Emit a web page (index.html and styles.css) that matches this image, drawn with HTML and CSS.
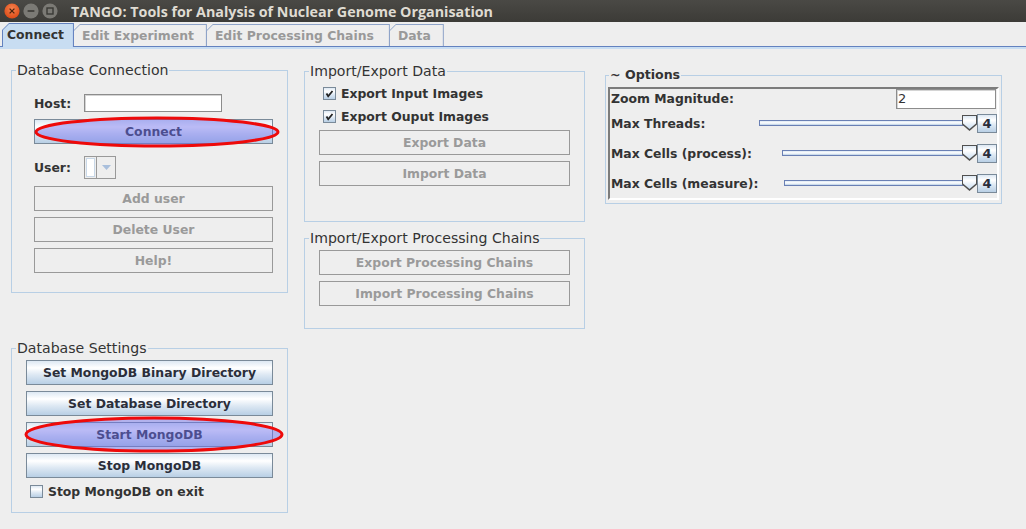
FILE: index.html
```html
<!DOCTYPE html>
<html lang="en">

<head>
    <meta charset="UTF-8">
    <title>TANGO: Tools for Analysis of Nuclear Genome Organisation</title>
    <link rel="stylesheet" href="styles.css">
</head>

<body>
    <div class="titlebar">
        <div class="win-buttons">
            <svg class="win-btn" width="16" height="16" viewBox="0 0 16 16">
                <defs>
                    <radialGradient id="closeGrad" cx="50%" cy="35%" r="65%">
                        <stop offset="0" stop-color="#f6834f" />
                        <stop offset="1" stop-color="#dd4a16" />
                    </radialGradient>
                </defs>
                <circle cx="8" cy="8" r="7.6" fill="url(#closeGrad)" />
                <path d="M5.6 5.6 L10.4 10.4 M10.4 5.6 L5.6 10.4" stroke="#4a2410" stroke-width="1.3" />
            </svg>
            <svg class="win-btn" width="16" height="16" viewBox="0 0 16 16">
                <circle cx="8" cy="8" r="7.6" fill="#7b7a75" />
                <path d="M4.6 8 H11.4" stroke="#3a3935" stroke-width="1.6" />
            </svg>
            <svg class="win-btn" width="16" height="16" viewBox="0 0 16 16">
                <circle cx="8" cy="8" r="7.6" fill="#7b7a75" />
                <rect x="5" y="5" width="6" height="6" fill="none" stroke="#3a3935" stroke-width="1.4" />
            </svg>
        </div>
        <span class="win-title">TANGO: Tools for Analysis of Nuclear Genome Organisation</span>
    </div>

    <div class="tabbar">
        <div class="tab active"><span>Connect</span></div>
        <div class="tab"><span>Edit Experiment</span></div>
        <div class="tab tab-wide"><span>Edit Processing Chains</span></div>
        <div class="tab"><span>Data</span></div>
    </div>

    <div class="content">
        <div class="col col-left">
            <fieldset class="panel">
                <legend>Database Connection</legend>
                <div class="panel-body conn-body">
                    <div class="field-row">
                        <label class="lbl" for="host">Host:</label>
                        <input type="text" id="host" class="text-input host-input">
                    </div>
                    <div class="marked connect-wrap">
                        <button class="btn">Connect</button>
                        <svg class="mark mark-connect" width="247" height="32" viewBox="0 0 247 32">
                            <ellipse cx="123" cy="16" rx="121" ry="14" fill="rgba(112,112,236,0.48)"
                                stroke="#ee0a0a" stroke-width="3" />
                        </svg>
                    </div>
                    <div class="field-row user-row">
                        <span class="lbl">User:</span>
                        <div class="combo">
                            <span class="combo-box"><span></span></span>
                            <span class="combo-arrow">
                                <svg width="9" height="5" viewBox="0 0 9 5">
                                    <path d="M0 0 H9 L4.5 5 Z" fill="#a9bfdc" />
                                </svg>
                            </span>
                        </div>
                    </div>
                    <div class="btn-stack user-buttons">
                        <button class="btn" disabled>Add user</button>
                        <button class="btn" disabled>Delete User</button>
                        <button class="btn" disabled>Help!</button>
                    </div>
                </div>
            </fieldset>

            <fieldset class="panel settings-panel">
                <legend>Database Settings</legend>
                <div class="panel-body settings-body">
                    <div class="btn-stack">
                        <button class="btn">Set MongoDB Binary Directory</button>
                        <button class="btn">Set Database Directory</button>
                        <div class="marked">
                            <button class="btn">Start MongoDB</button>
                            <svg class="mark mark-start" width="262" height="38" viewBox="0 0 262 38">
                                <ellipse cx="131" cy="18.5" rx="128" ry="16.5" fill="rgba(112,112,236,0.48)"
                                    stroke="#ee0a0a" stroke-width="3" />
                            </svg>
                        </div>
                        <button class="btn">Stop MongoDB</button>
                    </div>
                    <div class="check-row exit-row">
                        <span class="check"></span>
                        <span class="lbl">Stop MongoDB on exit</span>
                    </div>
                </div>
            </fieldset>
        </div>

        <div class="col col-mid">
            <fieldset class="panel data-panel">
                <legend>Import/Export Data</legend>
                <div class="panel-body data-body">
                    <div class="check-row">
                        <span class="check checked"><svg width="11" height="11" viewBox="0 0 11 11">
                                <path d="M2.5 5.5 L4.2 8.3 L8.5 3" fill="none" stroke="#222" stroke-width="1.8" />
                            </svg></span>
                        <span class="lbl">Export Input Images</span>
                    </div>
                    <div class="check-row second">
                        <span class="check checked"><svg width="11" height="11" viewBox="0 0 11 11">
                                <path d="M2.5 5.5 L4.2 8.3 L8.5 3" fill="none" stroke="#222" stroke-width="1.8" />
                            </svg></span>
                        <span class="lbl">Export Ouput Images</span>
                    </div>
                    <div class="btn-stack data-buttons">
                        <button class="btn" disabled>Export Data</button>
                        <button class="btn" disabled>Import Data</button>
                    </div>
                </div>
            </fieldset>

            <fieldset class="panel chains-panel">
                <legend>Import/Export Processing Chains</legend>
                <div class="panel-body chains-body">
                    <div class="btn-stack">
                        <button class="btn" disabled>Export Processing Chains</button>
                        <button class="btn" disabled>Import Processing Chains</button>
                    </div>
                </div>
            </fieldset>
        </div>

        <div class="col col-right">
            <fieldset class="panel options-panel">
                <legend class="bold-legend">~ Options</legend>
                <div class="panel-body options-body">
                    <div class="options">
                        <div class="opt-row zoom-row">
                            <span class="lbl">Zoom Magnitude:</span>
                            <input type="text" class="text-input zoom-input" value="2">
                        </div>
                        <div class="opt-row slider-row">
                            <span class="lbl">Max Threads:</span>
                            <div class="slider slider-threads">
                                <span class="track"></span>
                                <span class="thumb"><span></span></span>
                            </div>
                            <button class="spin-btn">4</button>
                        </div>
                        <div class="opt-row slider-row">
                            <span class="lbl">Max Cells (process):</span>
                            <div class="slider slider-process">
                                <span class="track"></span>
                                <span class="thumb"><span></span></span>
                            </div>
                            <button class="spin-btn">4</button>
                        </div>
                        <div class="opt-row slider-row">
                            <span class="lbl">Max Cells (measure):</span>
                            <div class="slider slider-measure">
                                <span class="track"></span>
                                <span class="thumb"><span></span></span>
                            </div>
                            <button class="spin-btn">4</button>
                        </div>
                    </div>
                </div>
            </fieldset>
        </div>
    </div>
</body>

</html>
```

FILE: styles.css
```css
* {
    margin: 0;
    padding: 0;
    box-sizing: border-box;
}

body {
    font-family: 'DejaVu Sans', Verdana, sans-serif;
    font-size: 12.4px;
    color: #333;
    background: #eeeeee;
    width: 1026px;
    height: 529px;
    overflow: hidden;
}

/* window title bar */
.titlebar {
    height: 22px;
    background: linear-gradient(#4a4945, #3c3b37);
    display: flex;
    align-items: center;
    padding-left: 4px;
}

.win-buttons {
    display: flex;
    gap: 3px;
}

.win-btn {
    display: block;
}

.win-title {
    margin-left: 13px;
    color: #dfdbd2;
    font-family: 'Open Sans', 'DejaVu Sans', sans-serif;
    font-weight: bold;
    font-size: 14.3px;
}

/* tabs */
.tabbar {
    height: 25px;
    display: flex;
    align-items: flex-end;
    padding-left: 2px;
    border-bottom: 1px solid #6382bf;
}

.tab {
    height: 22px;
    padding: 1px 1px 0 1px;
    background: #8ea3c8;
    clip-path: polygon(0 7px, 7px 0, 100% 0, 100% 100%, 0 100%);
    margin-left: -1px;
}

.tab span {
    display: block;
    height: 100%;
    padding: 0 12px 0 8px;
    background: #eeeeee;
    clip-path: polygon(0 6px, 6px 0, 100% 0, 100% 100%, 0 100%);
    line-height: 21px;
    font-weight: bold;
    color: #999;
}

.tab-wide span {
    padding-right: 15px;
}

.tab.active {
    height: 24px;
    margin-bottom: -1px;
    margin-left: 0;
    background: #6382bf;
    position: relative;
    z-index: 1;
}

.tab.active span {
    background: #c8ddf2;
    color: #333;
    padding-left: 4px;
    padding-right: 9px;
    line-height: 22px;
}

/* main area */
.content {
    display: flex;
    align-items: flex-start;
    border-top: 2px solid #c8ddf2;
    padding: 13px 0 0 11px;
}

.col {
    display: flex;
    flex-direction: column;
}

.col-left {
    width: 277px;
}

.col-mid {
    width: 281px;
    margin-left: 16px;
}

.col-right {
    width: 397px;
    margin-left: 20px;
}

fieldset.panel {
    border: 1px solid #b8cfe5;
    min-width: 0;
}

legend {
    margin-left: 4px;
    padding: 0 1px;
    font-size: 14.1px;
    line-height: 16px;
    color: #333;
}

.bold-legend {
    font-size: 12.6px;
    font-weight: bold;
    margin-left: 3px;
}

.panel-body {
    display: flex;
    flex-direction: column;
}

.lbl {
    font-weight: bold;
    color: #333;
    white-space: nowrap;
}

/* buttons */
.btn {
    display: block;
    width: 100%;
    height: 25px;
    border: 1px solid #7a8a99;
    background: linear-gradient(#dde8f3 0%, #ffffff 30%, #dde8f3 60%, #b8cfe5 100%);
    font-family: inherit;
    font-size: 12.4px;
    font-weight: bold;
    color: #2b2e3a;
}

.btn:disabled {
    background: #eeeeee;
    border-color: #999;
    color: #9a9a9a;
}

.btn-stack {
    display: flex;
    flex-direction: column;
    gap: 6px;
}

.marked {
    position: relative;
}

.mark {
    position: absolute;
    pointer-events: none;
    overflow: visible;
}

.mark-connect {
    left: 0;
    top: -3px;
}

.mark-start {
    left: -3px;
    top: -6px;
}

/* inputs */
.text-input {
    background: #fff;
    border: 1px solid #8c8c8c;
    box-shadow: inset 1px 1px 0 #d4d4d4;
    font-family: inherit;
    font-size: 13px;
    color: #333;
    outline: none;
}

.field-row {
    display: flex;
    align-items: center;
}

.field-row .lbl {
    width: 50px;
}

/* database connection */
.conn-body {
    padding: 16px 14px 19px 22px;
}

.host-input {
    width: 138px;
    height: 18px;
}

.connect-wrap {
    margin-top: 7px;
}

.user-row {
    margin-top: 12px;
}

.combo {
    display: flex;
    width: 32px;
    height: 23px;
    border: 1px solid #999;
}

.combo-box {
    width: 12px;
    padding: 1px;
    border-right: 1px solid #999;
}

.combo-box span {
    display: block;
    height: 100%;
    background: #fff;
    border: 1px solid #c9d8e8;
}

.combo-arrow {
    flex: 1;
    display: flex;
    align-items: center;
    justify-content: center;
}

.user-buttons {
    margin-top: 7px;
}

/* database settings */
.settings-panel {
    margin-top: 47px;
}

.settings-body {
    padding: 4px 14px 14px 14px;
}

.check-row {
    display: flex;
    align-items: center;
    height: 13px;
    gap: 5px;
    margin-left: 4px;
}

.check {
    display: flex;
    align-items: center;
    justify-content: center;
    width: 13px;
    height: 13px;
    border: 1px solid #7a8a99;
    background: linear-gradient(#dde8f3 0%, #ffffff 30%, #dde8f3 60%, #b8cfe5 100%);
}

.exit-row {
    margin-top: 7px;
}

/* import / export */
.data-panel {
    margin-top: 1px;
}

.data-body {
    padding: 8px 14px 35px 14px;
}

.check-row.second {
    margin-top: 10px;
}

.data-buttons {
    margin-top: 7px;
}

.chains-panel {
    margin-top: 8px;
}

.chains-body {
    padding: 4px 14px 22px 14px;
}

/* options */
.options-panel {
    margin-top: 5px;
}

.options-body {
    padding: 4px 2px 3px 2px;
}

.options {
    height: 113px;
    border: 2px solid;
    border-color: #7c7c7c #ffffff #ffffff #7c7c7c;
    padding-left: 1px;
}

.opt-row {
    display: flex;
    align-items: center;
}

.zoom-row {
    height: 19px;
}

.zoom-input {
    margin-left: auto;
    margin-right: 1px;
    width: 100px;
    height: 20px;
    padding-left: 1px;
}

.slider-row {
    height: 30px;
}

.slider {
    display: flex;
    align-items: center;
    margin-left: auto;
}

.slider-threads {
    width: 218px;
}

.slider-process {
    width: 195px;
}

.slider-measure {
    width: 193px;
}

.track {
    flex: 1;
    height: 6px;
    border: 1px solid #6a80b4;
    background: linear-gradient(#dde8f3, #ffffff 50%, #b8cfe5);
}

.thumb {
    width: 15px;
    height: 16px;
    margin-left: -6px;
    padding: 1px;
    background: #505050;
    clip-path: polygon(0 0, 100% 0, 100% 60%, 50% 100%, 0 60%);
}

.thumb span {
    display: block;
    height: 13px;
    background: linear-gradient(#dde8f3 0%, #ffffff 35%, #c8ddf2 100%);
    clip-path: polygon(0 0, 100% 0, 100% 58%, 50% 100%, 0 58%);
}

.spin-btn {
    width: 20px;
    height: 19px;
    border: 1px solid #7a8a99;
    background: linear-gradient(#dde8f3 0%, #ffffff 30%, #dde8f3 60%, #b8cfe5 100%);
    font-family: inherit;
    font-size: 13px;
    font-weight: bold;
    color: #2b2e3a;
}
```
